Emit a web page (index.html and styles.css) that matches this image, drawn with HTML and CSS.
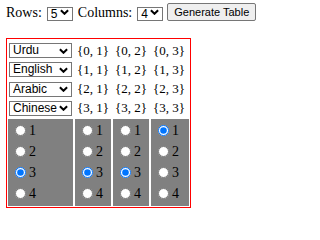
FILE: index.html
```html
<!DOCTYPE html>
<html>
<head>
<meta charset="utf-8">
<link rel="stylesheet" href="styles.css">
</head>
<body>
<div class="controls">
  <label class="ctl-label" for="rows">Rows:</label>
  <span class="sel-wrap">
    <select id="rows" class="num-select">
      <option>1</option><option>2</option><option>3</option><option>4</option><option selected>5</option>
    </select>
    <svg class="chev" viewBox="0 0 10 6" width="9" height="6"><path d="M1 1 L5 5 L9 1"/></svg>
  </span>
  <label class="ctl-label" for="cols">Columns:</label>
  <span class="sel-wrap">
    <select id="cols" class="num-select">
      <option>1</option><option>2</option><option>3</option><option selected>4</option><option>5</option>
    </select>
    <svg class="chev" viewBox="0 0 10 6" width="9" height="6"><path d="M1 1 L5 5 L9 1"/></svg>
  </span>
  <button class="gen-btn" type="button">Generate Table</button>
</div>

<div class="grid">
  <div class="cell sel-cell"><span class="sel-wrap"><select class="lang-select"><option selected>Urdu</option><option>English</option><option>Arabic</option><option>Chinese</option></select><svg class="chev" viewBox="0 0 10 6" width="9" height="6"><path d="M1 1 L5 5 L9 1"/></svg></span></div>
  <div class="cell coord">{0, 1}</div>
  <div class="cell coord">{0, 2}</div>
  <div class="cell coord">{0, 3}</div>

  <div class="cell sel-cell"><span class="sel-wrap"><select class="lang-select"><option>Urdu</option><option selected>English</option><option>Arabic</option><option>Chinese</option></select><svg class="chev" viewBox="0 0 10 6" width="9" height="6"><path d="M1 1 L5 5 L9 1"/></svg></span></div>
  <div class="cell coord">{1, 1}</div>
  <div class="cell coord">{1, 2}</div>
  <div class="cell coord">{1, 3}</div>

  <div class="cell sel-cell"><span class="sel-wrap"><select class="lang-select"><option>Urdu</option><option>English</option><option selected>Arabic</option><option>Chinese</option></select><svg class="chev" viewBox="0 0 10 6" width="9" height="6"><path d="M1 1 L5 5 L9 1"/></svg></span></div>
  <div class="cell coord">{2, 1}</div>
  <div class="cell coord">{2, 2}</div>
  <div class="cell coord">{2, 3}</div>

  <div class="cell sel-cell"><span class="sel-wrap"><select class="lang-select"><option>Urdu</option><option>English</option><option>Arabic</option><option selected>Chinese</option></select><svg class="chev" viewBox="0 0 10 6" width="9" height="6"><path d="M1 1 L5 5 L9 1"/></svg></span></div>
  <div class="cell coord">{3, 1}</div>
  <div class="cell coord">{3, 2}</div>
  <div class="cell coord">{3, 3}</div>

  <div class="cell radio-cell">
    <label class="opt"><input type="radio" name="c0">1</label>
    <label class="opt"><input type="radio" name="c0">2</label>
    <label class="opt"><input type="radio" name="c0" checked>3</label>
    <label class="opt"><input type="radio" name="c0">4</label>
  </div>
  <div class="cell radio-cell">
    <label class="opt"><input type="radio" name="c1">1</label>
    <label class="opt"><input type="radio" name="c1">2</label>
    <label class="opt"><input type="radio" name="c1" checked>3</label>
    <label class="opt"><input type="radio" name="c1">4</label>
  </div>
  <div class="cell radio-cell">
    <label class="opt"><input type="radio" name="c2">1</label>
    <label class="opt"><input type="radio" name="c2">2</label>
    <label class="opt"><input type="radio" name="c2" checked>3</label>
    <label class="opt"><input type="radio" name="c2">4</label>
  </div>
  <div class="cell radio-cell">
    <label class="opt"><input type="radio" name="c3" checked>1</label>
    <label class="opt"><input type="radio" name="c3">2</label>
    <label class="opt"><input type="radio" name="c3">3</label>
    <label class="opt"><input type="radio" name="c3">4</label>
  </div>
</div>
</body>
</html>
```

FILE: styles.css
```css
html, body {
  background: #ffffff;
}
body {
  margin: 3px 6px 0 6px;
  font-family: "Liberation Serif", "Times New Roman", serif;
  font-size: 14px;
  color: #000000;
}
.controls {
  display: flex;
  align-items: center;
  gap: 5px;
  height: 18px;
}
.ctl-label {
  line-height: 18px;
  position: relative;
  top: 1px;
}
.sel-wrap {
  position: relative;
  display: inline-flex;
}
.chev {
  position: absolute;
  right: 4px;
  top: 50%;
  margin-top: -3px;
  pointer-events: none;
}
.chev path {
  fill: none;
  stroke: #000000;
  stroke-width: 2.2;
}
.num-select,
.lang-select {
  appearance: none;
  -webkit-appearance: none;
  background: #ffffff;
  color: #000000;
  padding: 0 0 0 3px;
  margin: 0;
  font-family: "Liberation Sans", Arial, sans-serif;
  font-size: 12px;
  line-height: 13px;
  border: 1px solid #767676;
  border-radius: 0;
  box-sizing: border-box;
}
.num-select {
  width: 26px;
  height: 14px;
  margin-top: 4px;
}
.gen-btn {
  width: 89px;
  height: 18px;
  padding: 0 4px;
  margin: 0 0 0 -1px;
  font-family: "Liberation Sans", Arial, sans-serif;
  font-size: 11px;
  color: #000000;
  background: #efefef;
  border: 1px solid #767676;
  border-radius: 2px;
  box-sizing: border-box;
}
.grid {
  display: grid;
  grid-template-columns: 65px 36px 36px 38px;
  grid-template-rows: repeat(4, 17.25px) 87px;
  column-gap: 2px;
  row-gap: 2px;
  padding: 3px 1px 1px 1px;
  border: 1px solid #ff0000;
  width: max-content;
  margin-top: 17px;
}
.cell {
  display: flex;
  align-items: center;
  box-sizing: border-box;
}
.sel-cell {
  padding-left: 1px;
}
.lang-select {
  width: 63px;
  height: 15px;
}
.coord {
  padding-left: 2px;
  font-size: 13px;
  white-space: nowrap;
}
.radio-cell {
  background: #808080;
  flex-direction: column;
  align-items: stretch;
  padding-top: 1px;
}
.opt {
  display: flex;
  align-items: center;
  height: 21px;
  gap: 3px;
  padding-left: 7px;
  font-size: 14px;
}
.opt input {
  width: 11px;
  height: 11px;
  margin: 0;
}
```
